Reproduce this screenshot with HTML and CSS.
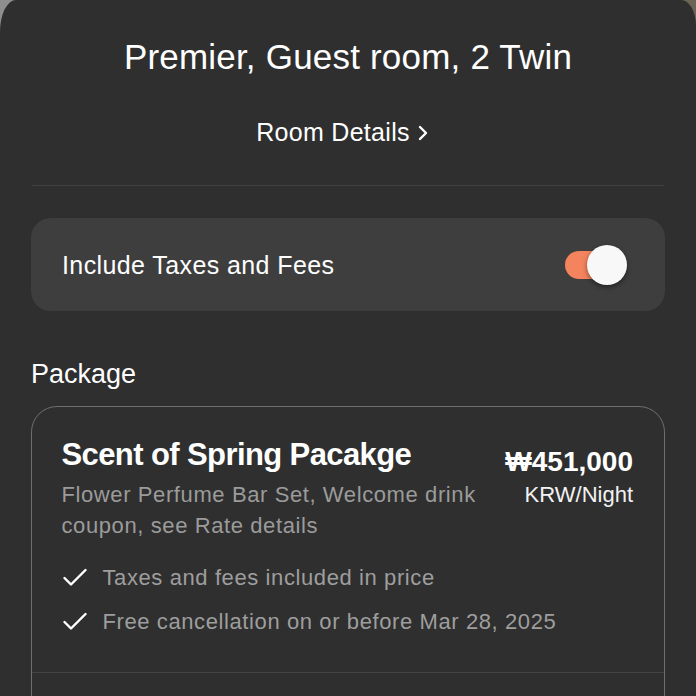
FILE: index.html
```html
<!DOCTYPE html>
<html lang="en">
  <head>
    <meta charset="utf-8">
    <title>Room Rate</title>
    <link rel="stylesheet" href="styles.css">
  </head>
  <body>
    <div class="sheet">
      <h1 class="room-title">Premier, Guest room, 2 Twin</h1>
      <div class="room-link">
        <span>Room Details</span>
        <svg class="chevron" width="10" height="16" viewBox="0 0 10 16">
          <path d="M2 2 L8 8 L2 14" fill="none" stroke="#fff" stroke-width="2.4" stroke-linecap="round" stroke-linejoin="round"/>
        </svg>
      </div>
      <div class="divider"></div>

      <div class="tax-card">
        <span class="tax-label">Include Taxes and Fees</span>
        <div class="toggle">
          <div class="toggle-track"></div>
          <div class="toggle-knob"></div>
        </div>
      </div>

      <div class="section-title">Package</div>

      <div class="package-card">
        <div class="package-body">
          <div class="package-top">
            <div class="package-info">
              <div class="package-name">Scent of Spring Pacakge</div>
              <div class="package-desc">Flower Perfume Bar Set, Welcome drink coupon, see Rate details</div>
            </div>
            <div class="package-price">
              <div class="price">₩451,000</div>
              <div class="price-unit">KRW/Night</div>
            </div>
          </div>
          <ul class="perks">
            <li>
              <svg class="check" width="24" height="20" viewBox="0 0 24 20">
                <path d="M1.5 10 L8 16.5 L22.5 2" fill="none" stroke="#fff" stroke-width="2.4" stroke-linecap="round" stroke-linejoin="round"/>
              </svg>
              <span>Taxes and fees included in price</span>
            </li>
            <li>
              <svg class="check" width="24" height="20" viewBox="0 0 24 20">
                <path d="M1.5 10 L8 16.5 L22.5 2" fill="none" stroke="#fff" stroke-width="2.4" stroke-linecap="round" stroke-linejoin="round"/>
              </svg>
              <span>Free cancellation on or before Mar 28, 2025</span>
            </li>
          </ul>
        </div>
        <div class="package-footer"></div>
      </div>
    </div>
  </body>
</html>
```

FILE: styles.css
```css
html, body {
  margin: 0;
  padding: 0;
}
body {
  background: linear-gradient(90deg, #8e8e8e, #6b6356);
  font-family: "Liberation Sans", Arial, sans-serif;
  color: #ffffff;
  height: 696px;
  overflow: hidden;
}
.sheet {
  padding: 37px 31px 0;
  background-color: #2f2f2f;
  border-radius: 16px 15px 0 0 / 32px 26px 0 0;
  min-height: 700px;
}
.room-title {
  margin: 0;
  font-size: 35px;
  line-height: 40px;
  font-weight: normal;
  letter-spacing: 0.2px;
  text-align: center;
}
.room-link {
  margin-top: 40px;
  padding-right: 12px;
  display: flex;
  justify-content: center;
  align-items: center;
  gap: 8px;
  font-size: 25px;
  line-height: 30px;
  letter-spacing: 0.3px;
}
.chevron {
  margin-top: 1px;
}
.divider {
  margin: 38px 1px 0;
  height: 1px;
  background-color: #404040;
}
.tax-card {
  margin-top: 32px;
  height: 93px;
  display: flex;
  align-items: center;
  justify-content: space-between;
  padding: 0 38px 0 31px;
  background-color: #3e3e3e;
  border-radius: 20px;
}
.tax-label {
  font-size: 25px;
  line-height: 30px;
  letter-spacing: 0.4px;
}
.toggle {
  position: relative;
  width: 62px;
  height: 40px;
}
.toggle-track {
  position: absolute;
  left: 0;
  top: 6px;
  width: 54px;
  height: 28px;
  border-radius: 14px;
  background-color: #f4845e;
}
.toggle-knob {
  position: absolute;
  right: 0;
  top: 0;
  width: 40px;
  height: 40px;
  border-radius: 50%;
  background-color: #f8f8f8;
  box-shadow: 0 2px 5px rgba(0, 0, 0, 0.45);
}
.section-title {
  margin-top: 47px;
  font-size: 27px;
  line-height: 32px;
}
.package-card {
  margin-top: 16px;
  border: 1.5px solid #6e6e6e;
  border-radius: 26px;
}
.package-body {
  padding: 29px 31px 35px 29.5px;
}
.package-top {
  display: flex;
  justify-content: space-between;
  gap: 16px;
}
.package-info {
  flex: 1;
}
.package-name {
  font-size: 31px;
  line-height: 38px;
  font-weight: bold;
  letter-spacing: -0.6px;
}
.package-desc {
  margin-top: 5px;
  font-size: 22px;
  line-height: 31px;
  letter-spacing: 0.6px;
  color: #9b9b9b;
}
.package-price {
  padding-top: 8px;
  text-align: right;
  white-space: nowrap;
}
.price {
  font-size: 28px;
  line-height: 36px;
  font-weight: bold;
}
.price-unit {
  font-size: 22px;
  line-height: 30px;
  color: #f2f2f2;
}
.perks {
  list-style: none;
  margin: 22px 0 0;
  padding: 0;
  display: flex;
  flex-direction: column;
  gap: 14px;
}
.perks li {
  display: flex;
  align-items: center;
  gap: 16px;
  font-size: 22px;
  line-height: 30px;
  letter-spacing: 0.6px;
  color: #9e9e9e;
}
.check {
  margin-left: 1px;
  flex-shrink: 0;
}
.package-footer {
  height: 80px;
  border-top: 1.5px solid #444444;
}
```
